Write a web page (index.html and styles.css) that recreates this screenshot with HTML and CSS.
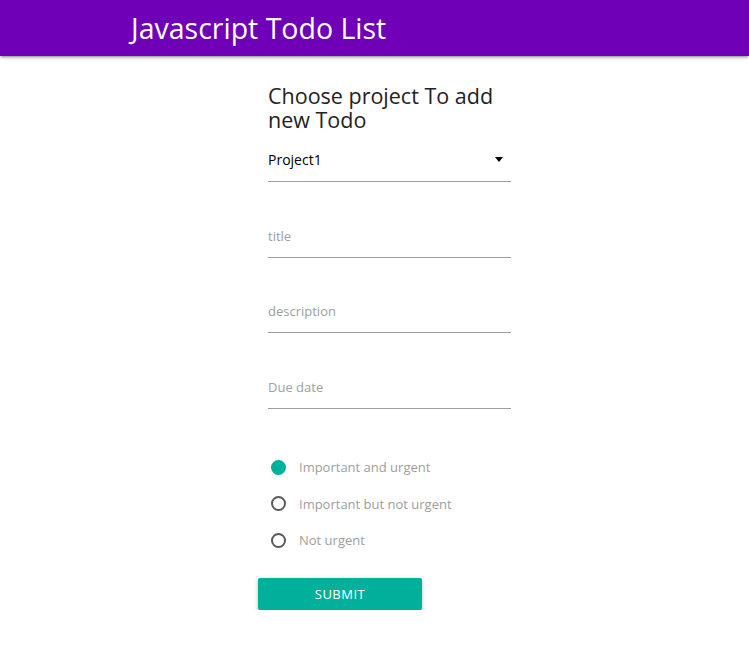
FILE: index.html
```html
<!DOCTYPE html>
<html>
<head>
<meta charset="utf-8">
<link rel="stylesheet" href="styles.css">
</head>
<body>
<header class="topbar">
  <h1 class="brand">Javascript Todo List</h1>
</header>
<main class="page">
  <form class="todo-form">
    <h2 class="form-title">Choose project To add new Todo</h2>
    <div class="field select-field">
      <span class="select-value">Project1</span>
      <span class="caret"></span>
    </div>
    <div class="field"><span class="placeholder">title</span></div>
    <div class="field field-tight"><span class="placeholder">description</span></div>
    <div class="field"><span class="placeholder">Due date</span></div>
    <div class="radios">
      <label class="radio"><span class="dot checked"></span><span class="radio-label">Important and urgent</span></label>
      <label class="radio"><span class="dot"></span><span class="radio-label">Important but not urgent</span></label>
      <label class="radio"><span class="dot"></span><span class="radio-label">Not urgent</span></label>
    </div>
    <button type="button" class="submit">SUBMIT</button>
  </form>
</main>
</body>
</html>
```
FILE: styles.css
```css
* { box-sizing: border-box; }
body {
  margin: 0;
  font-family: "Open Sans", "Noto Sans", sans-serif;
  background: #fff;
  color: #222;
}
.topbar {
  height: 56px;
  background: #7000b8;
  box-shadow: 0 2px 2px rgba(0,0,0,0.14), 0 3px 1px -2px rgba(0,0,0,0.12), 0 1px 5px rgba(0,0,0,0.2);
  display: flex;
  align-items: center;
  padding-left: 131px;
}
.brand {
  margin: 0;
  color: #fff;
  font-weight: 400;
  font-size: 28.5px;
  line-height: 1;
}
.page {
  padding-left: 258px;
}
.todo-form {
  width: 253px;
  display: flex;
  flex-direction: column;
}
.form-title {
  margin: 28px 0 0 10px;
  font-weight: 400;
  font-size: 21.5px;
  line-height: 24px;
  color: #222;
}
.field {
  margin-left: 10px;
  height: 44px;
  border-bottom: 1px solid #9e9e9e;
  display: flex;
  align-items: center;
  margin-top: 32px;
}
.field-tight {
  margin-top: 31px;
}
.select-field {
  margin-top: 6px;
  justify-content: space-between;
  padding-right: 8px;
}
.select-value {
  font-size: 14px;
  color: #000;
}
.caret {
  width: 0;
  height: 0;
  border-left: 4.5px solid transparent;
  border-right: 4.5px solid transparent;
  border-top: 5px solid #000;
}
.placeholder {
  font-size: 13px;
  color: #9e9e9e;
}
.radios {
  margin-top: 47px;
  margin-left: 13px;
  display: flex;
  flex-direction: column;
  gap: 14.5px;
}
.radio {
  display: flex;
  align-items: center;
  height: 22px;
}
.dot {
  width: 15px;
  height: 15px;
  border-radius: 50%;
  border: 2px solid #5a5a5a;
  margin-right: 13px;
}
.dot.checked {
  border-color: #00b09b;
  background: #00b09b;
}
.radio-label {
  font-size: 13px;
  color: #9e9e9e;
}
.submit {
  margin-top: 27px;
  width: 164px;
  height: 32px;
  border: none;
  border-radius: 2px;
  background: #00b09b;
  color: #fff;
  font-family: inherit;
  font-size: 13px;
  letter-spacing: 0.5px;
  box-shadow: 0 2px 2px rgba(0,0,0,0.14), 0 3px 1px -2px rgba(0,0,0,0.12), 0 1px 5px rgba(0,0,0,0.2);
}
```
